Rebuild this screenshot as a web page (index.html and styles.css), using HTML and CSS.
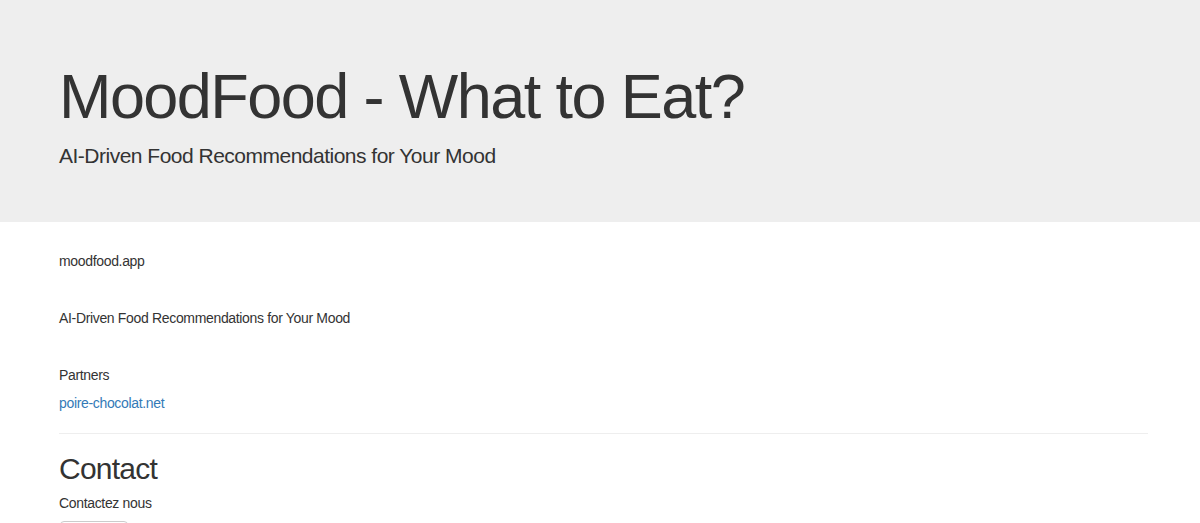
FILE: index.html
```html
<!DOCTYPE html>
<html lang="en">
<head>
<meta charset="utf-8">
<title>MoodFood - What to Eat?</title>
<link rel="stylesheet" href="styles.css">
</head>
<body>
<header class="jumbotron">
  <h1 class="jumbo-title">MoodFood - What to Eat?</h1>
  <p class="jumbo-lead">AI-Driven Food Recommendations for Your Mood</p>
</header>
<main class="content">
  <section class="block">
    <p class="text">moodfood.app</p>
  </section>
  <section class="block">
    <p class="text">AI-Driven Food Recommendations for Your Mood</p>
  </section>
  <section class="block">
    <p class="text">Partners</p>
    <p class="text"><a class="link" href="#">poire-chocolat.net</a></p>
  </section>
  <hr class="divider">
  <section class="contact">
    <h2 class="contact-title">Contact</h2>
    <p class="text">Contactez nous</p>
    <button class="btn" type="button">Envoyer</button>
  </section>
</main>
</body>
</html>
```
FILE: styles.css
```css
* { box-sizing: border-box; }
html, body { margin: 0; padding: 0; }
body {
  font-family: "Liberation Sans", Arial, Helvetica, sans-serif;
  font-size: 14px;
  line-height: 20px;
  letter-spacing: -0.024em;
  color: #333;
  background: #fff;
  overflow: hidden;
}
.jumbotron {
  background: #eee;
  padding: 42px 59px 36px;
  margin-bottom: 29px;
}
.jumbo-title {
  margin: 20px 0 10px;
  font-size: 63px;
  font-weight: 400;
  line-height: 1.1;
  letter-spacing: -0.025em;
  color: #333;
}
.jumbo-lead {
  margin: 0 0 15px;
  font-size: 21px;
  line-height: 30px;
  font-weight: 400;
  letter-spacing: -0.024em;
}
.content {
  padding: 0 52px 0 59px;
}
.block { margin-bottom: 37px; }
.block:nth-of-type(3) { margin-bottom: 0; }
.text { margin: 0 0 8px; }
.block .text:last-child { margin-bottom: 0; }
.link { color: #337ab7; text-decoration: none; }
.divider {
  border: 0;
  border-top: 1px solid #eee;
  margin: 20px 0 18px;
}
.contact-title {
  margin: 0 0 8px;
  font-size: 30px;
  line-height: 33px;
  font-weight: 400;
  letter-spacing: -0.025em;
}
.contact .text { margin-bottom: 8px; }
.btn {
  display: inline-block;
  width: 68px;
  height: 34px;
  margin-left: 1px;
  border: 1px solid #ccc;
  border-radius: 4px;
  background: #fff;
  color: #333;
  font: inherit;
}
```
